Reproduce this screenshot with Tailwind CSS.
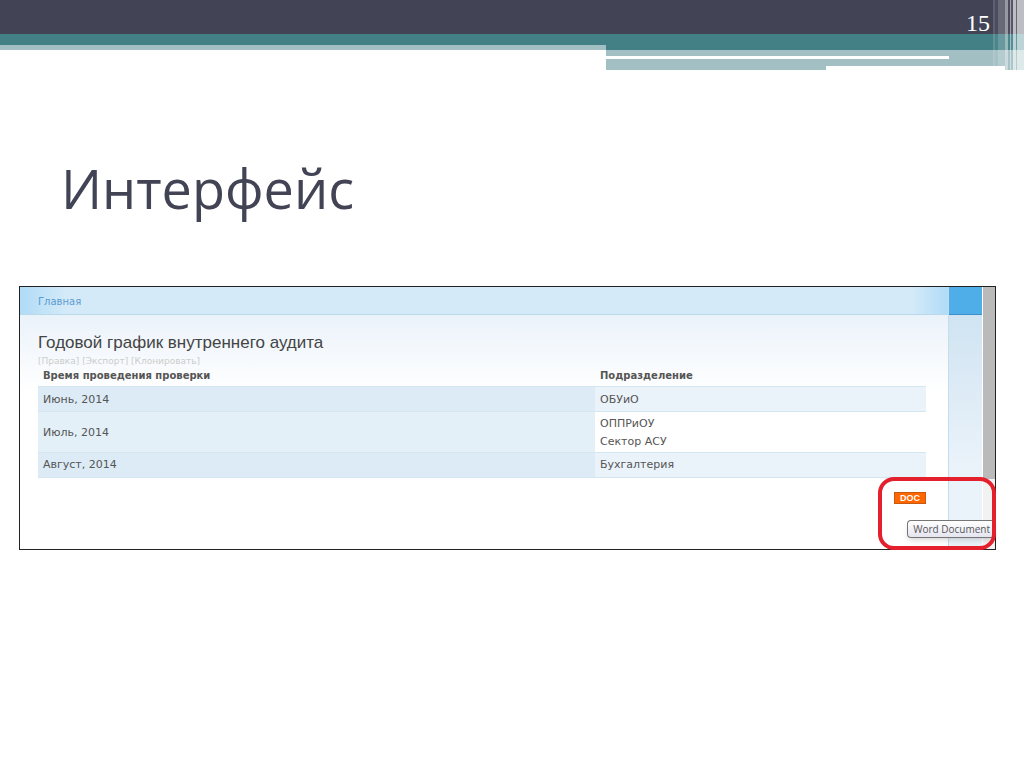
<!DOCTYPE html>
<html lang="ru">

<head>
    <meta charset="UTF-8">
    <meta name="viewport" content="width=device-width, initial-scale=1.0">
    <title>Интерфейс</title>
    <script src="https://cdn.jsdelivr.net/npm/@tailwindcss/browser@4"></script>
</head>

<body class="bg-white min-h-screen overflow-x-hidden">
    <!-- slide banner -->
    <header class="relative">
        <div class="h-[34px] bg-[#424456] flex justify-end items-center pr-[34px]">
            <span class="font-['Liberation_Serif',serif] text-2xl text-white pt-3">15</span>
        </div>
        <div class="flex items-start">
            <div class="w-[606px] h-4 bg-[#438086] border-b-[5px] border-[#a2bfc3]"></div>
            <div class="flex-1">
                <div class="h-4 bg-[#438086]"></div>
                <div class="h-5 bg-[#a2bfc3] flex flex-col justify-between pt-[6px]">
                    <div class="h-[3px] bg-white mr-[75px]"></div>
                    <div class="h-1 bg-white ml-[220px] mr-[19px]"></div>
                </div>
            </div>
        </div>
        <!-- translucent stripes on the right edge -->
        <div class="absolute inset-y-0 right-0 flex">
            <div class="w-[2px] bg-white/15"></div>
            <div class="w-[3px] bg-white/5"></div>
            <div class="w-[7px] bg-white/20"></div>
            <div class="w-[3px] bg-white/45"></div>
            <div class="w-[2px] bg-white/5"></div>
            <div class="w-px bg-white/50"></div>
            <div class="w-[2px] bg-white/10"></div>
            <div class="w-[3px] bg-white/65"></div>
            <div class="w-px bg-white/20"></div>
            <div class="w-[7px] bg-white/65"></div>
        </div>
    </header>

    <main>
        <h1 class="font-['Open_Sans',sans-serif] text-[54px] leading-[72px] text-[#424456] pl-[61px] pt-[82px]">Интерфейс</h1>

        <section class="relative mt-[62px] ml-[19px] mr-7 border border-[#222] flex font-['DejaVu_Sans',sans-serif] text-[11px] text-[#555]">
            <div class="flex-1 bg-linear-to-b from-[#eaf2fa] from-10% to-white to-40%">
                <nav class="h-7 flex items-center pl-[18px] text-[10px] border-b border-[#b9d8ea] bg-linear-to-r from-[#b0dbf7] via-[#d4eaf8] via-5% to-[#d4eaf8]">
                    <a href="#" class="text-[#5a9bd0] pt-px">Главная</a>
                    <span class="ml-auto w-9 h-full bg-linear-to-r from-[#d4eaf8] to-[#b0dbf7]"></span>
                </nav>
                <div class="pl-[18px] pr-[22px] pt-[18px] pb-[71px]">
                    <h2 class="font-['Liberation_Sans',sans-serif] text-[17px] leading-5 text-[#444]">Годовой график внутреннего аудита</h2>
                    <p class="text-[9px] leading-4 text-[#ccc]">
                        <a href="#">[Правка]</a> <a href="#">[Экспорт]</a> <a href="#">[Клонировать]</a>
                    </p>
                    <table class="w-full text-left leading-[18px]">
                        <thead>
                            <tr class="border-b border-[#d5e6f0] leading-[14px] text-[10px]">
                                <th class="w-[557px] px-[5px] pb-[3px]">Время проведения проверки</th>
                                <th class="px-[5px] pb-[3px]">Подразделение</th>
                            </tr>
                        </thead>
                        <tbody>
                            <tr class="border-b border-[#d5e6f0] bg-[#ebf3fa]">
                                <td class="px-[5px] pt-1 pb-[2px] bg-[#dcebf5]">Июнь, 2014</td>
                                <td class="px-[5px] pt-1 pb-[2px]">ОБУиО</td>
                            </tr>
                            <tr class="border-b border-[#d5e6f0] bg-white">
                                <td class="px-[5px] pt-[3px] pb-px bg-[#e4f0f7]">Июль, 2014</td>
                                <td class="px-[5px] pt-[3px] pb-px">ОППРиОУ<br>Сектор АСУ</td>
                            </tr>
                            <tr class="border-b border-[#d5e6f0] bg-[#ebf3fa]">
                                <td class="px-[5px] py-[3px] bg-[#dcebf5]">Август, 2014</td>
                                <td class="px-[5px] py-[3px]">Бухгалтерия</td>
                            </tr>
                        </tbody>
                    </table>
                </div>
            </div>
            <div class="w-[34px] bg-linear-to-b from-[#cbe1f0] to-[#ebf3fa] to-70% border-l border-[#c5dcec]">
                <div class="h-7 bg-[#4fade8] border-b border-[#3a8fce]"></div>
            </div>
            <div class="w-[13px] bg-[#f2f2f2] border-l border-white">
                <div class="h-48 bg-[#bababa]"></div>
            </div>

            <!-- export button, its tooltip and the red marker -->
            <button class="absolute right-[69px] bottom-[45px] w-8 h-3 bg-[#ff6600] border border-[#c85a10] text-white font-['Liberation_Sans',sans-serif] font-bold text-[9px] leading-[10px]">DOC</button>
            <span class="absolute right-0 bottom-[11px] h-[18px] pl-[5px] pr-[5px] border border-r-0 border-[#767676] rounded-l-sm bg-linear-to-b from-white to-[#e4e5f0] shadow-md font-['Open_Sans',sans-serif] text-[10px] leading-4 text-[#575757]">Word Document</span>
            <div class="absolute -right-px -bottom-px w-[118px] h-[73px] border-4 border-[#e3202b] rounded-2xl"></div>
        </section>
    </main>
</body>

</html>
